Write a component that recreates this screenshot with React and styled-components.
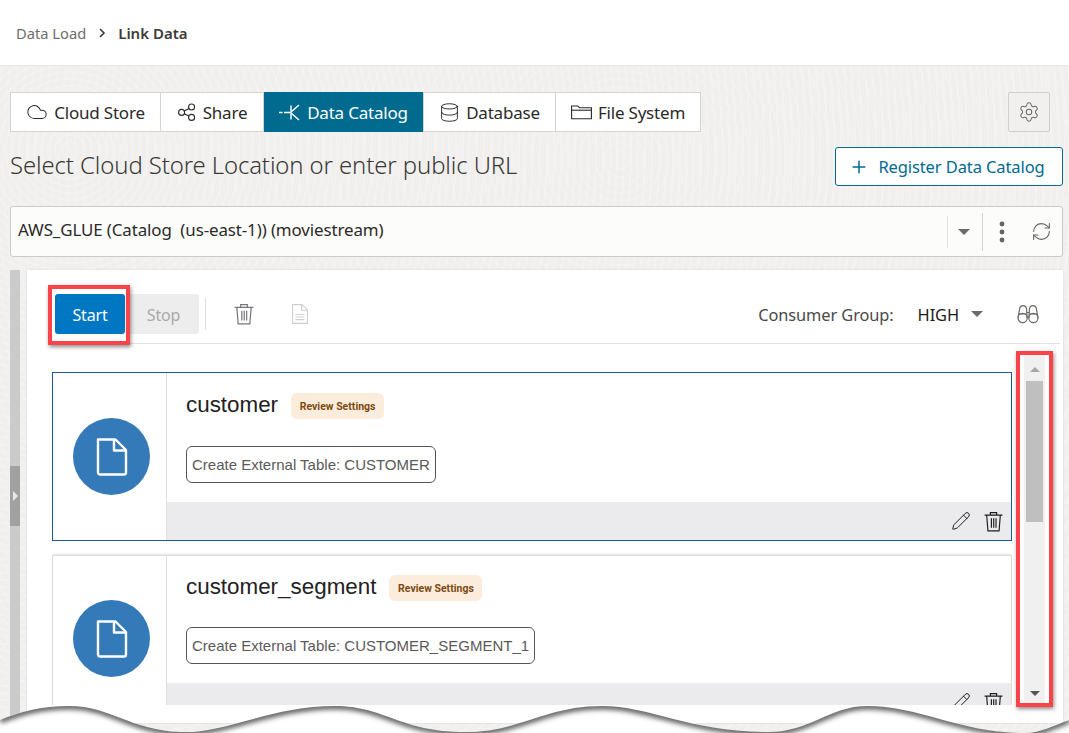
import React from "react";
import styled, { createGlobalStyle } from "styled-components";
import { Cloud, Database, Settings, Plus, RefreshCw, Pencil } from "lucide-react";

const GlobalStyle = createGlobalStyle`
  html, body {
    margin: 0;
    padding: 0;
    background: #fff;
  }
  body {
    font-family: "Noto Sans", "Open Sans", "Liberation Sans", sans-serif;
    color: #2b2a28;
  }
`;

const Page = styled.div`
  position: relative;
  width: 1069px;
  height: 733px;
  overflow: hidden;
  display: flex;
  flex-direction: column;
  background-color: #f0efed;
  background-image:
    repeating-radial-gradient(circle at 70px 150px, rgba(255, 255, 255, 0.18) 0 2px, transparent 2px 7px),
    repeating-radial-gradient(circle at 620px 160px, rgba(255, 255, 255, 0.14) 0 2px, transparent 2px 8px);
`;

const Header = styled.header`
  height: 66px;
  flex: none;
  display: flex;
  align-items: center;
  gap: 12px;
  padding-left: 16px;
  background: #fff;
  border-bottom: 1px solid #e6e5e3;
  box-sizing: border-box;
  font-size: 14.7px;
`;

const Crumb = styled.span`
  color: ${p => (p.$current ? "#3d3b38" : "#6f6d6a")};
  font-weight: ${p => (p.$current ? 600 : 400)};
  font-size: ${p => (p.$current ? 15 : 14.7)}px;
`;

const Main = styled.main`
  flex: 1;
  display: flex;
  flex-direction: column;
  padding: 26px 6px 10px 10px;
  min-height: 0;
`;

const TabRow = styled.div`
  display: flex;
  justify-content: space-between;
  height: 40px;
`;

const Tabs = styled.div`
  display: flex;
  height: 40px;
  box-sizing: border-box;
  background: #fff;
  border: 1px solid #d4d3d1;
`;

const Tab = styled.div`
  width: ${p => p.$width}px;
  box-sizing: border-box;
  display: flex;
  align-items: center;
  justify-content: center;
  gap: 6px;
  font-size: 17px;
  letter-spacing: -0.2px;
  color: ${p => (p.$active ? "#fff" : "#2b2a28")};
  background: ${p => (p.$active ? "#006b8f" : "transparent")};
  border-right: ${p => (p.$last ? "none" : "1px solid #d4d3d1")};
  margin: ${p => (p.$active ? "-1px 0" : "0")};
`;

const GearButton = styled.button`
  width: 42px;
  height: 40px;
  margin-right: 13px;
  padding: 0;
  display: flex;
  align-items: center;
  justify-content: center;
  background: #f1f0ee;
  border: 1px solid #cfcecc;
  border-radius: 2px;
  color: #6b6a67;
`;

const TitleRow = styled.div`
  display: flex;
  justify-content: space-between;
  align-items: center;
  height: 39px;
  margin-top: 15px;
`;

const Title = styled.h1`
  margin: -5px 0 0;
  font-size: 23.9px;
  font-weight: 300;
  letter-spacing: -0.1px;
  color: #3a3936;
`;

const RegisterButton = styled.button`
  width: 228px;
  height: 39px;
  padding: 0 4px 0 0;
  display: flex;
  align-items: center;
  justify-content: center;
  gap: 9px;
  box-sizing: border-box;
  background: #fff;
  border: 1px solid #006b8f;
  border-radius: 3px;
  color: #006b8f;
  font-family: inherit;
  font-size: 16.5px;
  letter-spacing: -0.1px;
`;

const SelectBar = styled.div`
  height: 51px;
  margin-top: 20px;
  flex: none;
  display: flex;
  align-items: center;
  box-sizing: border-box;
  background: #fcfcfb;
  border: 1px solid #cbcac8;
  border-radius: 3px;
  padding-left: 7px;
`;

const SelectValue = styled.div`
  flex: 1;
  padding-bottom: 4px;
  font-size: 16.9px;
  letter-spacing: -0.1px;
  white-space: pre;
  color: #2b2a28;
`;

const SelectCaretBox = styled.div`
  width: 35px;
  height: 32px;
  display: flex;
  align-items: center;
  justify-content: center;
  box-sizing: border-box;
  padding-right: 2px;
  border-left: 1px solid #e2e1df;
`;

const Caret = styled.span`
  display: block;
  width: 0;
  height: 0;
  border-left: ${p => p.$size}px solid transparent;
  border-right: ${p => p.$size}px solid transparent;
  border-top: ${p => p.$size}px solid #6b6a67;
`;

const SelectActions = styled.div`
  width: 80px;
  height: 38px;
  display: flex;
  align-items: center;
  justify-content: space-between;
  box-sizing: border-box;
  padding: 0 10px 0 15px;
  border-left: 1px solid #d4d3d1;
  color: #656462;
`;

const Body = styled.div`
  flex: 1;
  margin-top: 13px;
  display: flex;
  gap: 7px;
  min-height: 0;
`;

const Rail = styled.div`
  width: 10px;
  box-sizing: border-box;
  padding-bottom: 2px;
  display: flex;
  align-items: center;
  background: #cbcbcb;
`;

const RailHandle = styled.div`
  width: 10px;
  height: 60px;
  display: flex;
  align-items: center;
  justify-content: center;
  background: #a1a1a1;
`;

const RailArrow = styled.span`
  width: 0;
  height: 0;
  border-top: 5px solid transparent;
  border-bottom: 5px solid transparent;
  border-left: 5px solid #e9e9e9;
`;

const Panel = styled.section`
  flex: 1;
  min-width: 0;
  display: flex;
  flex-direction: column;
  background: #fff;
  padding: 0 3px 18px 21px;
  box-shadow: 0 0 2px rgba(0, 0, 0, 0.12);
`;

const Toolbar = styled.div`
  flex: none;
  display: flex;
  align-items: center;
  padding: 24px 0 9px 7px;
  border-bottom: 1px solid #e2e2e2;
`;

const StartWrap = styled.div`
  position: relative;
`;

const ActionButton = styled.button`
  width: ${p => p.$width}px;
  height: 40px;
  padding: 2px 0 0 ${p => (p.$primary ? 0 : 3)}px;
  border: none;
  border-radius: 3px;
  font-family: inherit;
  font-size: 16px;
  letter-spacing: -0.2px;
  color: ${p => (p.$primary ? "#fff" : "#a9a9a9")};
  background: ${p => (p.$primary ? "#0077c2" : "#ededed")};
`;

const Highlight = styled.div`
  position: absolute;
  box-sizing: border-box;
  border: 4px solid #fb4349;
  box-shadow: 1px 2px 4px rgba(0, 0, 0, 0.45);
  pointer-events: none;
  z-index: 3;
`;

const StartHighlight = styled(Highlight)`
  top: -9px;
  left: -7px;
  right: -5px;
  bottom: -11px;
`;

const ToolbarDivider = styled.span`
  width: 1px;
  height: 32px;
  margin: 0 27px 0 6px;
  background: #dedede;
`;

const ToolIcon = styled.span`
  display: flex;
  margin-right: ${p => p.$gap || 0}px;
  color: ${p => p.$color};
`;

const ConsumerGroup = styled.div`
  margin-left: auto;
  display: flex;
  align-items: center;
  font-size: 16.4px;
  letter-spacing: -0.1px;
  color: #4a4946;
`;

const ConsumerValue = styled.span`
  margin: 0 12px 0 24px;
  color: #1c1b19;
`;

const BinocularsBox = styled.span`
  display: flex;
  margin: 0 21px 0 34px;
  color: #6b6a67;
`;

const ScrollRow = styled.div`
  flex: 1;
  min-height: 0;
  display: flex;
  align-items: flex-start;
`;

const CardList = styled.div`
  width: 960px;
  height: 100%;
  margin-left: 4px;
  padding-top: 28px;
  box-sizing: border-box;
  overflow: hidden;
  flex: none;
`;

const Card = styled.article`
  height: ${p => (p.$selected ? 169 : 167)}px;
  box-sizing: border-box;
  margin-bottom: 14px;
  display: flex;
  background: #fff;
  border: 1px solid ${p => (p.$selected ? "#17599f" : "#dcdcdc")};
  box-shadow: ${p => (p.$selected ? "none" : "0 0 3px rgba(0, 0, 0, 0.22)")};
`;

const CardIconCol = styled.div`
  width: 114px;
  flex: none;
  display: flex;
  align-items: center;
  justify-content: center;
  box-sizing: border-box;
  padding-left: 4px;
  border-right: 1px solid #e0e0e0;
`;

const IconCircle = styled.div`
  width: 77px;
  height: 77px;
  border-radius: 50%;
  display: flex;
  align-items: center;
  justify-content: center;
  background: #347ab8;
`;

const CardMain = styled.div`
  flex: 1;
  display: flex;
  flex-direction: column;
  min-width: 0;
`;

const CardContent = styled.div`
  flex: 1;
  padding: ${p => (p.$selected ? 20 : 19)}px 0 0 19px;
  font-family: "Liberation Sans", Arial, sans-serif;
`;

const CardTitleRow = styled.div`
  display: flex;
  align-items: center;
  gap: 13px;
  height: 26px;
`;

const CardName = styled.h2`
  margin: -2px 0 0;
  font-size: 22.4px;
  font-weight: 400;
  color: #222;
`;

const Badge = styled.span`
  width: 93px;
  height: 26px;
  display: flex;
  align-items: center;
  justify-content: center;
  border-radius: 6px;
  background: #fcecdc;
  color: #7c4a10;
  font-family: Roboto, sans-serif;
  font-size: 10.5px;
  font-weight: 700;
`;

const Chip = styled.div`
  display: inline-flex;
  align-items: center;
  height: 37px;
  margin-top: ${p => (p.$selected ? 27 : 26)}px;
  padding: 0 5px;
  box-sizing: border-box;
  border: 1px solid #555;
  border-radius: 6px;
  font-size: 15px;
  color: #5a5a5a;
`;

const CardFooter = styled.div`
  height: 38px;
  flex: none;
  display: flex;
  align-items: center;
  justify-content: flex-end;
  gap: 12px;
  padding-right: 7px;
  background: #ebebed;
  color: #1d1d1d;
`;

const ScrollTrack = styled.div`
  position: relative;
  width: 21px;
  height: 349px;
  margin: 11px 0 0 12px;
  flex: none;
  display: flex;
  flex-direction: column;
  align-items: center;
  box-sizing: border-box;
  padding: 12px 0 8px;
  background: #f0f0f0;
`;

const ScrollThumb = styled.div`
  width: 17px;
  height: 141px;
  margin: 9px 0 auto;
  background: #bfbfbf;
`;

const ScrollArrow = styled.span`
  width: 0;
  height: 0;
  flex: none;
  border-left: 5px solid transparent;
  border-right: 5px solid transparent;
  border-top: ${p => (p.$down ? "5px solid #555" : "none")};
  border-bottom: ${p => (p.$down ? "none" : "5px solid #a6a6a6")};
`;

const ScrollHighlight = styled(Highlight)`
  top: -4px;
  left: -8px;
  right: -8px;
  bottom: -3px;
`;

const TornEdge = styled.svg`
  position: absolute;
  left: 0;
  bottom: 0;
  z-index: 5;
  display: block;
`;

const ShareIcon = () => (
  <svg width="20" height="20" viewBox="0 0 20 20" fill="none" stroke="currentColor" strokeWidth="1.1">
    <circle cx="4.6" cy="10.4" r="3" />
    <circle cx="14.6" cy="5" r="3" />
    <circle cx="14.6" cy="15.4" r="3" />
    <path d="M7.3 9 11.9 6.4M7.3 11.8l4.6 2.3" />
  </svg>
);

const CatalogIcon = () => (
  <svg width="22" height="20" viewBox="0 0 22 20" fill="none" stroke="currentColor" strokeWidth="1.4">
    <path d="M0 10.5h3.5M5 10.5h6.5M20 3l-8.5 7.5L20 18M12 3.5v14" />
  </svg>
);

const FolderIcon = () => (
  <svg width="21" height="18" viewBox="0 0 21 18" fill="none" stroke="currentColor" strokeWidth="1.1">
    <path d="M.6 3h6.2l1.8 1.8h11.8v11H.6z" />
    <path d="M.6 7.2h19.8" />
  </svg>
);

const KebabIcon = () => (
  <svg width="8" height="22" viewBox="0 0 8 22" fill="currentColor">
    <circle cx="4" cy="3" r="2.4" />
    <circle cx="4" cy="11" r="2.4" />
    <circle cx="4" cy="19" r="2.4" />
  </svg>
);

const TrashIcon = ({ size = 20 }) => (
  <svg width={size} height={size} viewBox="0 0 20 20" fill="none" stroke="currentColor" strokeWidth="1.1">
    <path d="M1.5 4h17M7 4V1.5h6V4M3.5 4l1.2 15h10.6L16.5 4M8 7v9M10.2 7v9M12.4 7v9" />
  </svg>
);

const DocIcon = () => (
  <svg width="16" height="20" viewBox="0 0 16 20" fill="none" stroke="currentColor" strokeWidth="1.1">
    <path d="M.6.6h9.4l5.4 5.2v13.6H.6z" />
    <path d="M9.6.8v5.4h5.6M3.4 10.5h9M3.4 13h9M3.4 15.6h9" />
  </svg>
);

const BinocularsIcon = () => (
  <svg width="22" height="20" viewBox="0 0 22 20" fill="none" stroke="currentColor" strokeWidth="1.2">
    <circle cx="5.6" cy="14" r="4.6" />
    <circle cx="16.4" cy="14" r="4.6" />
    <path d="M1 14 2.6 5c.5-4.5 6.4-4.5 6.9-.2L10.2 14M21 14 19.4 5c-.5-4.5-6.4-4.5-6.9-.2L11.8 14" />
    <path d="M9.6 8.5h2.8M1.6 10h8M12.4 10h8" />
  </svg>
);

const FileGlyph = () => (
  <svg width="32" height="38" viewBox="0 0 32 38" fill="none" stroke="#fff" strokeWidth="2.4" strokeLinejoin="round">
    <path d="M2 1.5h17.5L30 12v22.5a2 2 0 0 1-2 2H4a2 2 0 0 1-2-2z" />
    <path d="M18 2v10.5h12" />
  </svg>
);

const WAVE =
  "M0 720C20 712 40 706 70 706C110 706 130 730 180 732C225 734 270 706 335 706C385 706 400 732 465 732C520 732 545 706 602 706C650 706 690 732 768 732C810 732 830 706 867 706C920 706 960 733 1025 733C1040 733 1055 725 1069 720";

const Torn = () => (
  <TornEdge width="1069" height="733" viewBox="0 0 1069 733">
    <defs>
      <clipPath id="tornArea">
        <path d={`${WAVE}V733H0Z`} />
      </clipPath>
      <filter id="tornBlur" x="-5%" y="-50%" width="110%" height="200%">
        <feGaussianBlur stdDeviation="2.4" />
      </filter>
    </defs>
    <path d={`${WAVE}V733H0Z`} fill="#fff" />
    <g clipPath="url(#tornArea)">
      <path d={WAVE} fill="none" stroke="#5f5f5f" strokeWidth="7" filter="url(#tornBlur)" />
    </g>
  </TornEdge>
);

const TABS = [
  { label: "Cloud Store", width: 150, icon: <Cloud size={22} strokeWidth={1.1} /> },
  { label: "Share", width: 103, icon: <ShareIcon /> },
  { label: "Data Catalog", width: 160, icon: <CatalogIcon />, active: true },
  { label: "Database", width: 132, icon: <Database size={21} strokeWidth={1.1} /> },
  { label: "File System", width: 144, icon: <FolderIcon />, last: true },
];

const CARDS = [
  { name: "customer", table: "CUSTOMER", selected: true },
  { name: "customer_segment", table: "CUSTOMER_SEGMENT_1" },
];

const App = () => (
  <Page>
    <GlobalStyle />
    <Header>
      <Crumb>Data Load</Crumb>
      <svg width="8" height="10" viewBox="0 0 8 10" fill="none" stroke="#3d3b38" strokeWidth="1.6">
        <path d="M2 1l4 4-4 4" />
      </svg>
      <Crumb $current>Link Data</Crumb>
    </Header>
    <Main>
      <TabRow>
        <Tabs>
          {TABS.map(tab => (
            <Tab key={tab.label} $width={tab.width} $active={tab.active} $last={tab.last}>
              {tab.icon}
              {tab.label}
            </Tab>
          ))}
        </Tabs>
        <GearButton>
          <Settings size={22} strokeWidth={1.1} />
        </GearButton>
      </TabRow>
      <TitleRow>
        <Title>Select Cloud Store Location or enter public URL</Title>
        <RegisterButton>
          <Plus size={20} strokeWidth={1.8} />
          Register Data Catalog
        </RegisterButton>
      </TitleRow>
      <SelectBar>
        <SelectValue>AWS_GLUE (Catalog  (us-east-1)) (moviestream)</SelectValue>
        <SelectCaretBox>
          <Caret $size={6} />
        </SelectCaretBox>
        <SelectActions>
          <KebabIcon />
          <RefreshCw size={21} strokeWidth={1.2} />
        </SelectActions>
      </SelectBar>
      <Body>
        <Rail>
          <RailHandle>
            <RailArrow />
          </RailHandle>
        </Rail>
        <Panel>
          <Toolbar>
            <StartWrap>
              <ActionButton $primary $width={70}>Start</ActionButton>
              <StartHighlight />
            </StartWrap>
            <ActionButton $width={74}>Stop</ActionButton>
            <ToolbarDivider />
            <ToolIcon $gap={37} $color="#77767a">
              <TrashIcon size={22} />
            </ToolIcon>
            <ToolIcon $color="#cfcfcf">
              <DocIcon />
            </ToolIcon>
            <ConsumerGroup>
              Consumer Group:
              <ConsumerValue>HIGH</ConsumerValue>
              <Caret $size={6} />
              <BinocularsBox>
                <BinocularsIcon />
              </BinocularsBox>
            </ConsumerGroup>
          </Toolbar>
          <ScrollRow>
            <CardList>
              {CARDS.map(card => (
                <Card key={card.name} $selected={card.selected}>
                  <CardIconCol>
                    <IconCircle>
                      <FileGlyph />
                    </IconCircle>
                  </CardIconCol>
                  <CardMain>
                    <CardContent $selected={card.selected}>
                      <CardTitleRow>
                        <CardName>{card.name}</CardName>
                        <Badge>Review Settings</Badge>
                      </CardTitleRow>
                      <Chip $selected={card.selected}>Create External Table: {card.table}</Chip>
                    </CardContent>
                    <CardFooter>
                      <Pencil size={20} strokeWidth={1.2} />
                      <TrashIcon size={21} />
                    </CardFooter>
                  </CardMain>
                </Card>
              ))}
            </CardList>
            <ScrollTrack>
              <ScrollArrow />
              <ScrollThumb />
              <ScrollArrow $down />
              <ScrollHighlight />
            </ScrollTrack>
          </ScrollRow>
        </Panel>
      </Body>
    </Main>
    <Torn />
  </Page>
);

export default App;
